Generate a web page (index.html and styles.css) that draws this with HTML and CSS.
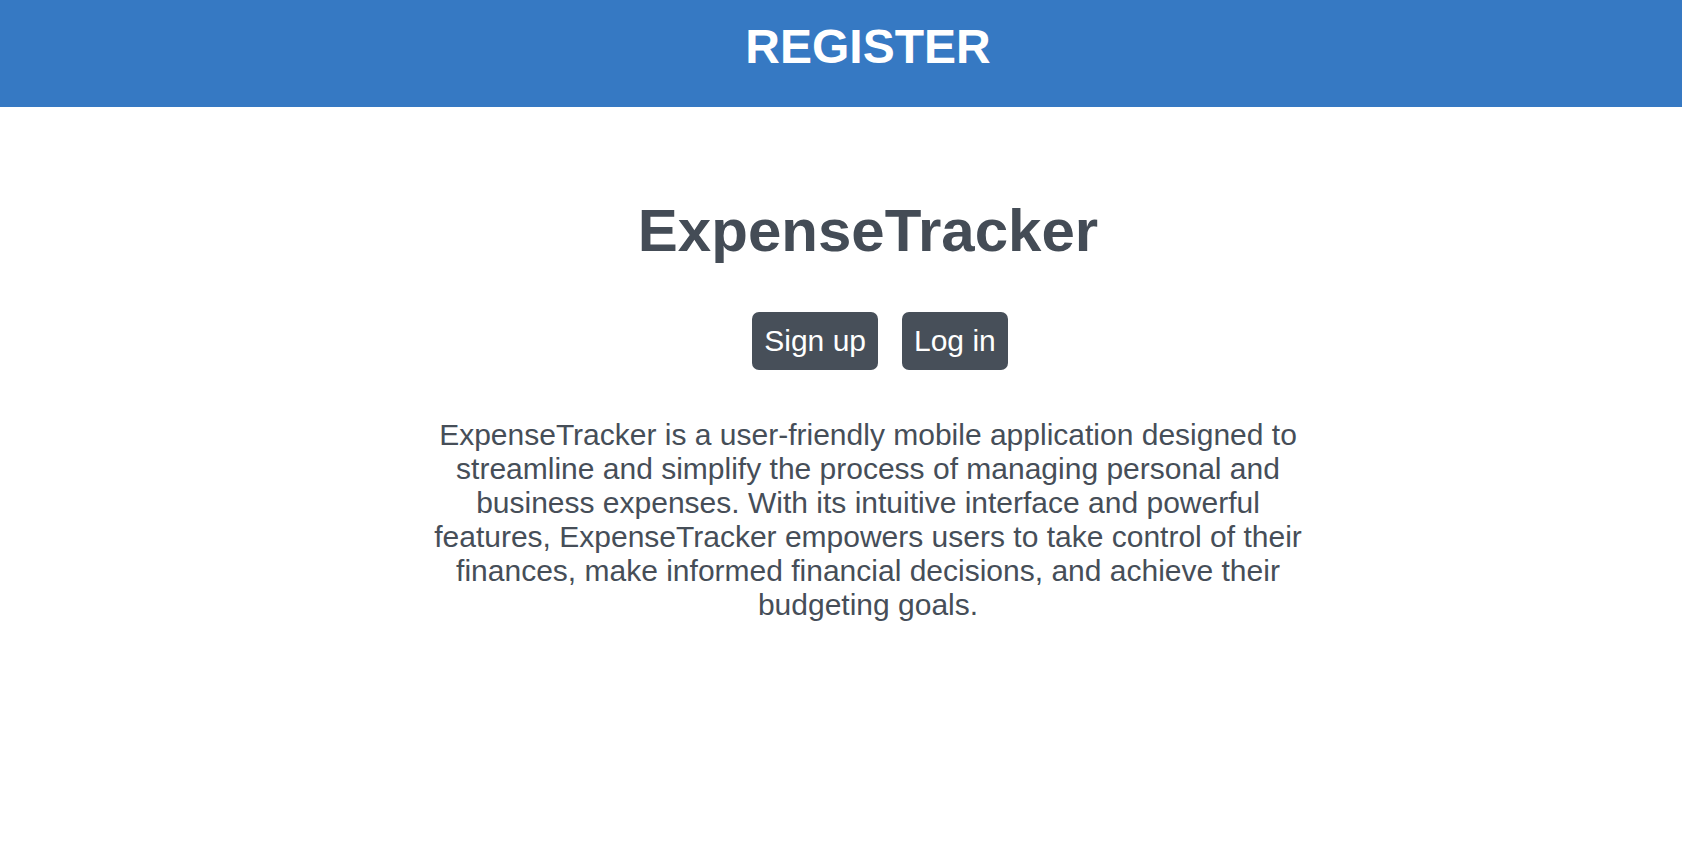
FILE: index.html
```html
<!DOCTYPE html>
<html lang="en">
<head>
<meta charset="utf-8">
<title>Register</title>
<link rel="stylesheet" href="styles.css">
</head>
<body>
<header class="topbar">
  <h1 class="topbar-title">REGISTER</h1>
</header>
<main class="hero">
  <h2 class="hero-title">ExpenseTracker</h2>
  <div class="hero-actions">
    <a class="btn" href="#">Sign up</a>
    <a class="btn" href="#">Log in</a>
  </div>
  <p class="hero-text">ExpenseTracker is a user-friendly mobile application designed to streamline and simplify the process of managing personal and business expenses. With its intuitive interface and powerful features, ExpenseTracker empowers users to take control of their finances, make informed financial decisions, and achieve their budgeting goals.</p>
</main>
</body>
</html>
```
FILE: styles.css
```css
* { box-sizing: border-box; }
html, body {
  margin: 0;
  padding: 0;
  background: #ffffff;
  font-family: "Liberation Sans", Arial, sans-serif;
  color: #464e58;
}
.topbar {
  background: #3679c3;
  height: 107px;
  padding: 19px 0 0 54px;
  text-align: center;
}
.topbar-title {
  margin: 0;
  font-size: 48px;
  font-weight: bold;
  color: #ffffff;
  line-height: 55px;
}
.hero {
  display: flex;
  flex-direction: column;
  align-items: center;
  text-align: center;
  padding-left: 54px;
}
.hero-title {
  margin: 89px 0 0;
  font-size: 60px;
  font-weight: bold;
  line-height: 69px;
  color: #444c56;
}
.hero-actions {
  display: flex;
  gap: 24px;
  padding-left: 24px;
  margin-top: 47px;
}
.btn {
  display: inline-block;
  background: #474f59;
  color: #ffffff;
  text-decoration: none;
  font-size: 30px;
  line-height: 34px;
  padding: 12px 12px;
  border-radius: 7px;
}
.hero-text {
  width: 890px;
  margin: 48px 0 0;
  font-size: 30px;
  line-height: 34px;
  color: #464e58;
}
```
